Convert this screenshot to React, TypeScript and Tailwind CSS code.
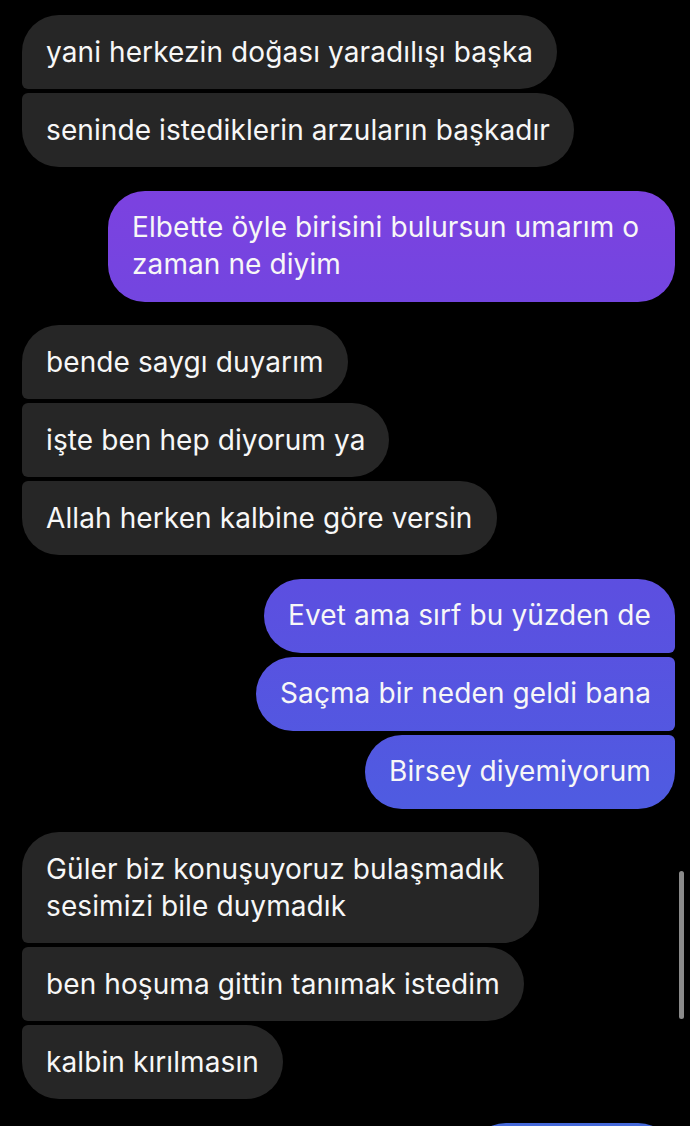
import React from 'react';

type Msg = {
  text: string;
  mine: boolean;
  pos: 'single' | 'first' | 'middle' | 'last';
  w?: string;
};

const groups: Msg[][] = [
  [
    { text: 'yani herkezin doğası yaradılışı başka', mine: false, pos: 'first' },
    { text: 'seninde istediklerin arzuların başkadır', mine: false, pos: 'last' },
  ],
  [
    {
      text: 'Elbette öyle birisini bulursun umarım o\nzaman ne diyim',
      mine: true,
      pos: 'single',
      w: 'w-[567px]',
    },
  ],
  [
    { text: 'bende saygı duyarım', mine: false, pos: 'first' },
    { text: 'işte ben hep diyorum ya', mine: false, pos: 'middle' },
    { text: 'Allah herken kalbine göre versin', mine: false, pos: 'last' },
  ],
  [
    { text: 'Evet ama sırf bu yüzden de', mine: true, pos: 'first' },
    { text: 'Saçma bir neden geldi bana', mine: true, pos: 'middle' },
    { text: 'Birsey diyemiyorum', mine: true, pos: 'last' },
  ],
  [
    {
      text: 'Güler biz konuşuyoruz bulaşmadık\nsesimizi bile duymadık',
      mine: false,
      pos: 'first',
      w: 'w-[517px]',
    },
    { text: 'ben hoşuma gittin tanımak istedim', mine: false, pos: 'middle' },
    { text: 'kalbin kırılmasın', mine: false, pos: 'last' },
  ],
];

// the side facing the sender gets the small radius where bubbles stack
const cornerClass: Record<string, Record<string, string>> = {
  theirs: {
    single: 'rounded-[37px]',
    first: 'rounded-[37px] rounded-bl-[6px]',
    middle: 'rounded-[37px] rounded-tl-[6px] rounded-bl-[6px]',
    last: 'rounded-[37px] rounded-tl-[6px]',
  },
  mine: {
    single: 'rounded-[37px]',
    first: 'rounded-[37px] rounded-br-[6px]',
    middle: 'rounded-[37px] rounded-tr-[6px] rounded-br-[6px]',
    last: 'rounded-[37px] rounded-tr-[6px]',
  },
};

const sentBg =
  'bg-fixed bg-[linear-gradient(180deg,#843ce0_0%,#7b42e0_18%,#5c4fe0_52%,#4f5be1_71%,#4569d9_100%)]';

function Bubble({ msg }: { msg: Msg }) {
  const corners = cornerClass[msg.mine ? 'mine' : 'theirs'][msg.pos];
  return (
    <div className={msg.mine ? 'flex justify-end' : 'flex justify-start'}>
      <div
        className={
          (msg.w ?? 'w-fit') +
          ' whitespace-pre-line px-6 py-[18.5px] text-[28px] leading-[37px] tracking-[0.1px] text-[#f7f7f7] ' +
          corners +
          ' ' +
          (msg.mine ? sentBg : 'bg-[#262626]')
        }
      >
        {msg.text}
      </div>
    </div>
  );
}

export default function App() {
  return (
    <div
      className="relative h-[1126px] w-[690px] overflow-hidden bg-black"
      style={{ fontFamily: 'Inter, "Noto Sans", sans-serif' }}
    >
      <div className="flex flex-col gap-[23.5px] pt-[15px] pl-[22px] pr-[15px]">
        {groups.map((g, i) => (
          <div key={i} className="flex flex-col gap-1">
            {g.map((m, j) => (
              <Bubble key={j} msg={m} />
            ))}
          </div>
        ))}
        {/* next sent message, only its top edge is on screen */}
        <div className="flex justify-end">
          <div className={'h-[74px] w-[206px] rounded-[37px] ' + sentBg}></div>
        </div>
      </div>
      {/* scroll indicator */}
      <div className="absolute left-[679px] top-[871px] h-[148px] w-[5px] rounded-full bg-[#8a8a8a]"></div>
    </div>
  );
}
